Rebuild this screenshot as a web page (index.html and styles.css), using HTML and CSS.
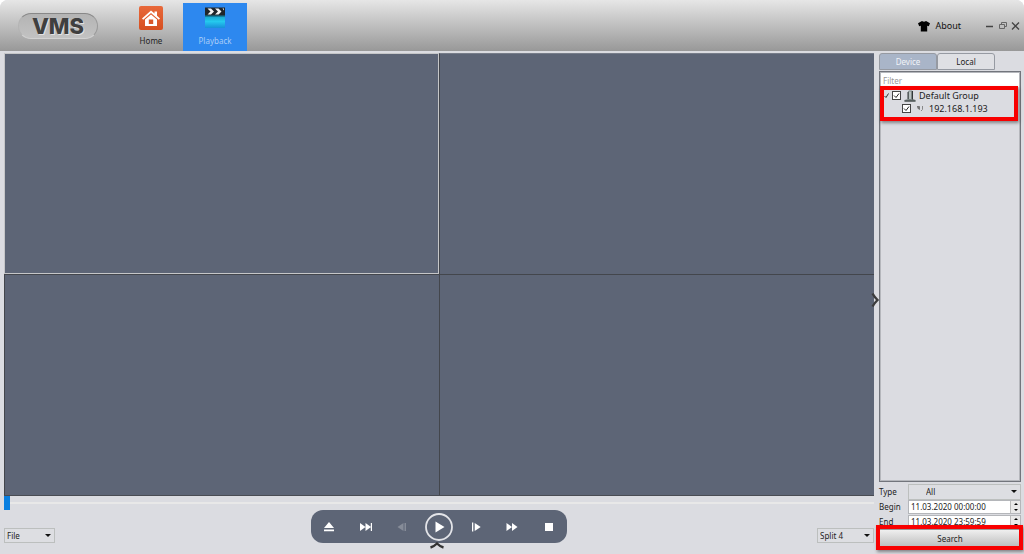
FILE: index.html
```html
<!DOCTYPE html>
<html lang="en">
<head>
<meta charset="utf-8">
<title>VMS Playback</title>
<link rel="stylesheet" href="styles.css">
</head>
<body>
<div class="app">
  <header class="header">
    <div class="logo">VMS</div>
    <nav class="nav">
      <button class="nav-item" type="button">
        <svg class="nav-icon" viewBox="0 0 24 24"><defs><linearGradient id="hg" x2="0" y2="1"><stop offset="0" stop-color="#e8693b"/><stop offset="1" stop-color="#d64f20"/></linearGradient></defs><rect width="24" height="24" rx="2" fill="url(#hg)"/><path d="M3 12.500 12 4.500l3.500 3V5.500h2.500v4.200l3 2.800-1.200 1.300L12 7l-7.800 6.800z" fill="#fff"/><path d="M6 13.500 12 8.500l6 5V20H6z" fill="#fff"/><path d="M9.800 13.500h4.400v4.500H9.800z" fill="#d9572a"/></svg>
        <span>Home</span>
      </button>
      <button class="nav-item active" type="button">
        <svg class="nav-icon" viewBox="0 0 24 24"><defs><linearGradient id="pg" x2="0" y2="1"><stop offset="0" stop-color="#139cc2"/><stop offset=".5" stop-color="#25c9ee"/><stop offset="1" stop-color="#178fd9"/></linearGradient></defs><path d="M2 9h20v13H2z" fill="url(#pg)"/><path d="M2 9h20v2H2z" fill="#127f9f"/><path d="M2 1.500h20V9.500H2z" fill="#20262b"/><path d="M4.500 2.500H8l3 3-3 3H4.500l3-3zM12 2.500h3.500l3 3-3 3H12l3-3zM19.500 2.500H21v2z" fill="#f2f2f2"/></svg>
        <span>Playback</span>
      </button>
    </nav>
    <div class="header-tools">
      <button class="about" type="button">
        <svg width="12" height="12" viewBox="0 0 12 12"><path d="M4 1Q6 2.600 8 1l4 2.200-1.200 3L9.200 5.700V11.500H2.800V5.700L1.200 6.200 0 3.200z" fill="#000"/></svg>
        <span>About</span>
      </button>
      <div class="window-buttons">
        <button type="button" aria-label="Minimize"><svg viewBox="0 0 9 9"><path d="M1 5.500h7" stroke="#444" stroke-width="1.400" fill="none"/></svg></button>
        <button type="button" aria-label="Restore"><svg viewBox="0 0 9 9"><path d="M1.500 3.500h5v4h-5zM3.500 3V1.500h5v4H7" stroke="#666" fill="none"/></svg></button>
        <button type="button" aria-label="Close"><svg viewBox="0 0 9 9"><path d="m1 1.500 7 7m0-7-7 7" stroke="#444" stroke-width="1.300" fill="none"/></svg></button>
      </div>
    </div>
  </header>

  <div class="workspace">
    <main class="player">
      <div class="video-grid">
        <div class="cell selected"></div><div class="cell"></div>
        <div class="cell"></div><div class="cell"></div>
      </div>
      <div class="timeline"><div class="marker"></div><div class="track"></div></div>
      <div class="footer">
        <div class="footer-side">
          <select class="combo file" aria-label="File"><option>File</option></select>
        </div>
        <div class="controls">
          <button type="button" aria-label="Eject"><svg viewBox="0 0 12 12"><path d="M6 1l5 6H1zM1 8.500h10v1.800H1z"/></svg></button>
          <button type="button" aria-label="Next file"><svg viewBox="0 0 12 12"><path d="M0 2l5.500 4L0 10zM5.500 2 11 6l-5.500 4zM10.800 2H12v8h-1.200z"/></svg></button>
          <button type="button" aria-label="Step back" disabled><svg viewBox="0 0 12 12"><path d="M7.500 2v8L1.500 6zM8.500 2H10v8H8.500z"/></svg></button>
          <button class="play" type="button" aria-label="Play"><svg viewBox="0 0 28 28"><circle cx="14" cy="14" r="13" fill="none" stroke="#e3e4e8" stroke-width="1.800"/><path d="M10.500 8.500v11l9-5.500z"/></svg></button>
          <button type="button" aria-label="Step forward"><svg viewBox="0 0 12 12"><path d="M2 1.500h1.300v9H2zM4.700 2l6 4-6 4z"/></svg></button>
          <button type="button" aria-label="Fast forward"><svg viewBox="0 0 12 12"><path d="M.5 2 6 6 .5 10zM6 2l5.500 4L6 10z"/></svg></button>
          <button type="button" aria-label="Stop"><svg viewBox="0 0 12 12"><path d="M2 2h8v8H2z"/></svg></button>
          <svg class="chevron" viewBox="0 0 16 7"><path d="M1.500 5.500Q5 4.500 8 1.500q3 3 6.500 4" fill="none" stroke="#333" stroke-width="2.400"/></svg>
        </div>
        <div class="footer-side end">
          <select class="combo split" aria-label="Split"><option>Split 4</option></select>
        </div>
      </div>
      <svg class="collapse" viewBox="0 0 8 16"><path d="M1.500 1.500Q3.500 5 6.500 8q-3 3-5 6.500" fill="none" stroke="#3c3c3c" stroke-width="2.400"/></svg>
    </main>

    <aside class="sidebar">
      <div class="tabs">
        <button class="tab current" type="button">Device</button>
        <button class="tab" type="button">Local</button>
      </div>
      <div class="tree-panel">
        <input class="filter" type="text" placeholder="Filter" aria-label="Filter">
        <div class="tree">
          <div class="node">
            <svg class="twist" viewBox="0 0 5 5"><path d="M.5 3 2 4.500 4.500.5" fill="none" stroke="#333"/></svg>
            <input type="checkbox" id="grp" checked>
            <svg class="group-icon" viewBox="0 0 12 12"><path d="M4 1.500 5 .5h3l1 1v7.500l2.500 1v1.500H.5V10L4 9z" fill="#7d8685"/><path d="M5 1.500h2V9H5z" fill="#b9c2c1"/><path d="M.5 11h11M8.500 1v8.500M4 2v7" stroke="#323838" fill="none"/></svg>
            <label for="grp">Default Group</label>
          </div>
          <div class="node child">
            <input type="checkbox" id="dev" checked>
            <svg class="cam-icon" viewBox="0 0 8 8"><path d="M1 1.500h2.500v3L1.500 3" fill="#777" stroke="#555" stroke-width=".6"/><path d="M6.500 1v3.500L5 6" fill="none" stroke="#888"/></svg>
            <label for="dev">192.168.1.193</label>
          </div>
          <div class="mark tree-mark"></div>
        </div>
      </div>
      <form class="query">
        <div class="row"><label for="type">Type</label><select id="type" class="combo type"><option>All</option></select></div>
        <div class="row"><label for="begin">Begin</label><div class="date"><input id="begin" type="text" value="11.03.2020 00:00:00"><div class="spin"><button type="button" aria-label="Increase begin"><svg viewBox="0 0 4 2"><path d="M0 2h4L2 0z"/></svg></button><button type="button" aria-label="Decrease begin"><svg viewBox="0 0 4 2"><path d="M0 0h4L2 2z"/></svg></button></div></div></div>
        <div class="row"><label for="end">End</label><div class="date"><input id="end" type="text" value="11.03.2020 23:59:59"><div class="spin"><button type="button" aria-label="Increase end"><svg viewBox="0 0 4 2"><path d="M0 2h4L2 0z"/></svg></button><button type="button" aria-label="Decrease end"><svg viewBox="0 0 4 2"><path d="M0 0h4L2 2z"/></svg></button></div></div></div>
        <div class="search-wrap"><button class="search" type="button">Search</button><div class="mark search-mark"></div></div>
      </form>
    </aside>
  </div>
</div>
</body>
</html>
```
FILE: styles.css
```css
* { box-sizing: border-box; }
body {
  margin: 0;
  background: #fff;
  color: #222;
  font: 8px/12px "Noto Sans", "Open Sans", sans-serif;
}
button, input, select { margin: 0; padding: 0; border: 0; background: none; color: inherit; font: inherit; }
svg { display: block; }
.app { display: flex; flex-direction: column; height: 100vh; background: #dbdce1; border-radius: 8px 8px 0 0; overflow: hidden; }

.header { display: flex; flex: none; height: 51px; padding-left: 18px; background: linear-gradient(#e6e6e6, #989898); }
.logo {
  width: 80px; height: 26px; margin-top: 13px;
  border: 1px solid; border-color: #888 #999 #d2d2d2 #b4b4b4; border-radius: 13px;
  background: linear-gradient(#b4b4b4, #c2c2c2);
  color: #3f3f3f; text-align: center; text-shadow: 1px 1px 0 #e2e2e2;
  font: 800 22px/25px Inter, "Liberation Sans", sans-serif;
}
.nav { display: flex; margin: 3px 0 0 21px; }
.nav-item { display: flex; flex-direction: column; align-items: center; gap: 5px; width: 64px; padding-top: 3px; }
.nav-item.active { background: #2d88ef; color: #a9cdf8; }
.nav-icon { width: 24px; height: 24px; }
.header-tools { display: flex; align-items: center; gap: 24px; margin-left: auto; padding-right: 4px; }
.about { display: flex; align-items: center; gap: 5px; font-size: 9px; color: #111; }
.window-buttons { display: flex; gap: 4px; }
.window-buttons svg { width: 9px; height: 9px; }

.workspace { display: flex; flex: 1; min-height: 0; gap: 5px; padding: 2px 3px 5px 4px; }
.player { position: relative; display: flex; flex: 1; flex-direction: column; min-width: 0; }
.video-grid { display: grid; flex: 1; grid-template: 1fr 1fr / 1fr 1fr; border-bottom: 1px solid #494c53; background: #5d6576; }
.cell { border: solid #43464c; border-width: 1px 0 0 1px; }
.cell:nth-child(2) { border-top-color: #777d8a; }
.cell.selected { border: 1px solid #c5c6c8; }
.timeline { display: flex; height: 14px; align-items: center; }
.marker { width: 6px; height: 14px; background: #087fe0; }
.track { flex: 1; height: 2px; background: #e8e8e8; }
.footer { display: flex; align-items: flex-end; height: 39px; padding-bottom: 6px; }
.footer-side { display: flex; flex: 1; }
.end { justify-content: flex-end; }
.combo {
  appearance: none; height: 15px; padding: 0 2px; border: 1px solid #bcbfbe;
  background: #dddee2 url("data:image/svg+xml,%3Csvg xmlns='http://www.w3.org/2000/svg' viewBox='0 0 6 4'%3E%3Cpath d='M0 0h6L3 3z' fill='%23111'/%3E%3C/svg%3E") no-repeat right 3px center / 6px 4px;
}
.file { width: 51px; }
.split { width: 57px; }
.controls {
  position: relative; display: flex; align-items: center;
  width: 256px; height: 33px; border-radius: 12px; background: #5d6576;
}
.controls button { display: flex; flex: 1; justify-content: center; }
.controls svg { width: 12px; height: 12px; fill: #fff; }
.controls button:disabled { opacity: .25; }
.controls .play svg { width: 28px; height: 28px; }
.controls .chevron { position: absolute; left: 118px; bottom: -6px; width: 16px; height: 7px; }
.collapse { position: absolute; right: -5px; top: 239px; width: 8px; height: 16px; }

.sidebar { display: flex; flex-direction: column; flex: none; width: 142px; }
.tabs { display: flex; }
.tab { width: 58px; height: 17px; border: 1px solid #969aa2; border-radius: 3px 3px 0 0; background: #dfe0e4; }
.tab.current { background: #a9b5c8; color: #f1f4f8; }
.tree-panel { display: flex; flex: 1; flex-direction: column; margin-top: 1px; border: 1px solid #72757c; outline: 1px solid #b5b7bc; outline-offset: -2px; padding: 1px; }
.filter { width: 100%; height: 14px; padding: 0 2px; background: #fff; }
.filter::placeholder { color: #999; opacity: 1; }
.tree { position: relative; flex: 1; padding: 2px 0 0 3px; font-size: 9px; line-height: 13px; color: #1b1b1b; }
.node { display: flex; align-items: center; gap: 3px; height: 13px; white-space: nowrap; }
.child { padding-left: 18px; }
.child .cam-icon { margin: 0 2px 0 2px; }
.node input {
  appearance: none; width: 9px; height: 9px; border: 1px solid #444;
  background: #fff url("data:image/svg+xml,%3Csvg xmlns='http://www.w3.org/2000/svg' viewBox='0 0 7 7'%3E%3Cpath d='M1 3.500 3 5.500 6 1.500' fill='none' stroke='%23222'/%3E%3C/svg%3E") center / 7px 7px;
}
.twist { width: 5px; height: 5px; }
.group-icon { width: 12px; height: 12px; }
.cam-icon { width: 8px; height: 8px; }
.mark { position: absolute; border: 4px solid #f80000; box-shadow: 1px 2px 3px #0006; pointer-events: none; }
.tree-mark { top: -1px; left: -1px; right: 1px; height: 35px; }

.query { margin-top: 2px; }
.row { display: flex; align-items: center; height: 15px; }
.row label { width: 29px; }
.type { flex: 1; height: 16px; padding-left: 17px; }
.date { display: flex; flex: 1; min-width: 0; height: 14px; border: 1px solid #b4b6ba; background: #fff; }
.date input { flex: 1; min-width: 0; padding-left: 2px; }
.spin { display: flex; flex-direction: column; width: 10px; border-left: 1px solid #bbb; background: #e9e9e9; }
.spin button { display: flex; flex: 1; align-items: center; justify-content: center; }
.spin svg { width: 4px; height: 2px; }
.search-wrap { position: relative; }
.search { width: 100%; height: 20px; border: 1px solid #999; background: linear-gradient(#efefef, #b9b9b9); }
.search-mark { top: -4px; right: -2px; bottom: -1px; left: -3px; }
```
